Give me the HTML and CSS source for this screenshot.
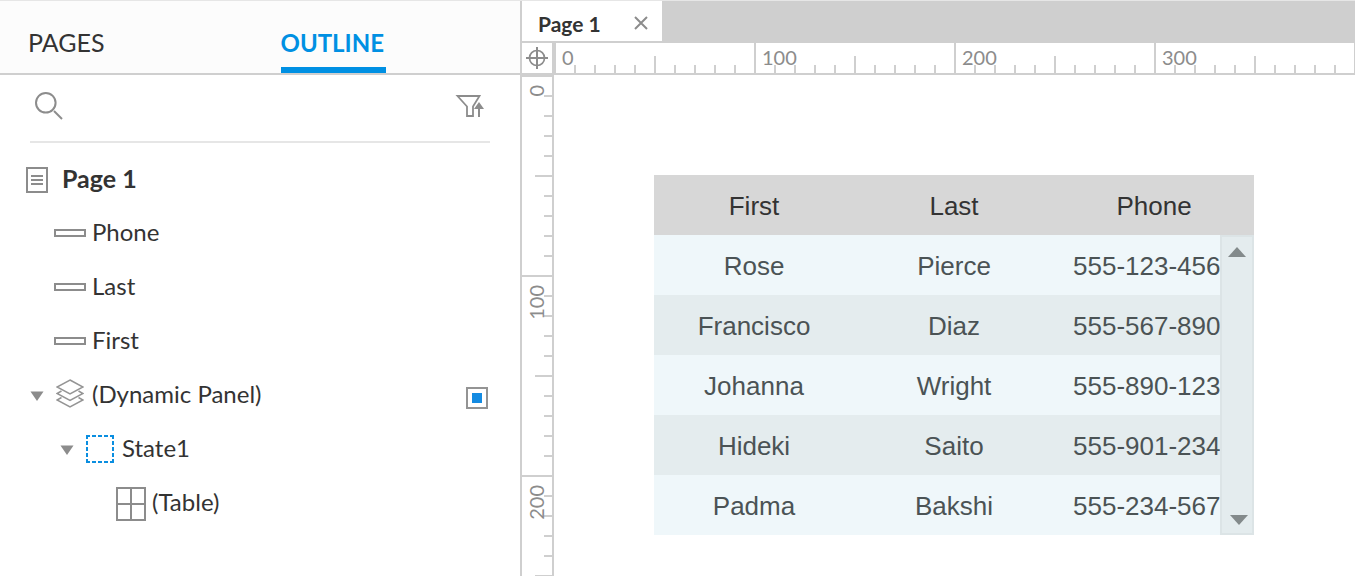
FILE: index.html
```html
<!DOCTYPE html>
<html lang="en">
<head>
<meta charset="utf-8">
<title>Page 1</title>
<link rel="stylesheet" href="styles.css">
</head>
<body>
<div class="app">
  <aside class="sidebar">
    <nav class="side-tabs">
      <button class="side-tab" type="button">PAGES</button>
      <button class="side-tab active" type="button">OUTLINE</button>
    </nav>
    <div class="search">
      <button class="icon-button" type="button" aria-label="Search">
        <svg width="30" height="30" viewBox="0 0 30 30" fill="none" stroke="#8c8c8c" stroke-width="2"><circle cx="11.8" cy="11.8" r="9.8"/><path d="M20 20l8 8"/></svg>
      </button>
      <button class="icon-button" type="button" aria-label="Filter">
        <svg width="30" height="30" viewBox="0 0 30 30" fill="none" stroke="#8c8c8c" stroke-width="2"><path d="M2.500 5H24.500L18 15.500V25H12V15.500Z" stroke-width="1.800"/><path d="M24 26V15"/><path d="M19 18L24 11L29 18Z" fill="#8c8c8c" stroke="none"/></svg>
      </button>
    </div>
    <ul class="tree">
      <li class="row level-0">
        <svg width="22" height="28" viewBox="0 0 22 28" fill="none" stroke="#8c8c8c" stroke-width="2"><path d="M1 3H21V27H1ZM5 11H17M5 15H17M5 19H17"/></svg>
        <span class="label page-name">Page 1</span>
      </li>
      <li class="row level-1">
        <svg width="32" height="8" viewBox="0 0 32 8" fill="none" stroke="#8c8c8c" stroke-width="2"><path d="M1 1H31V7H1Z"/></svg>
        <span class="label">Phone</span>
      </li>
      <li class="row level-1">
        <svg width="32" height="8" viewBox="0 0 32 8" fill="none" stroke="#8c8c8c" stroke-width="2"><path d="M1 1H31V7H1Z"/></svg>
        <span class="label">Last</span>
      </li>
      <li class="row level-1">
        <svg width="32" height="8" viewBox="0 0 32 8" fill="none" stroke="#8c8c8c" stroke-width="2"><path d="M1 1H31V7H1Z"/></svg>
        <span class="label">First</span>
      </li>
      <li class="row branch-1">
        <button class="icon-button toggle" type="button" aria-label="Collapse panel"><svg width="14" height="12" viewBox="0 0 14 12"><path d="M0.500 2.500H13.500L7 12Z" fill="#8c8c8c"/></svg></button>
        <svg width="28" height="32" viewBox="0 0 28 32" fill="none" stroke="#949494" stroke-width="1.500"><path d="M14 1L27 8L14 15L1 8Z"/><path d="M5.500 12L1 14.500L14 21.500L27 14.500L22.500 12"/><path d="M5.500 18.500L1 21L14 28L27 21L22.500 18.500"/></svg>
        <span class="label">(Dynamic Panel)</span>
        <button class="icon-button visibility" type="button" aria-label="Panel visibility"><svg width="22" height="28" viewBox="0 0 22 28"><path d="M1 7H21V27H1Z" fill="none" stroke="#949494" stroke-width="2"/><path d="M6 12H16V22H6Z" fill="#148be2"/></svg></button>
      </li>
      <li class="row branch-2">
        <button class="icon-button toggle" type="button" aria-label="Collapse state"><svg width="14" height="12" viewBox="0 0 14 12"><path d="M0.500 2.500H13.500L7 12Z" fill="#8c8c8c"/></svg></button>
        <svg width="28" height="28" viewBox="0 0 28 28" fill="none" stroke="#0a8ee0" stroke-width="2" stroke-dasharray="4 2"><path d="M0 1H28M0 27H28M1 0V28M27 0V28"/></svg>
        <span class="label">State1</span>
      </li>
      <li class="row level-3">
        <svg width="30" height="36" viewBox="0 0 30 36" fill="none" stroke="#8c8c8c" stroke-width="2"><path d="M1 3H29V35H1ZM15 3V35M1 19H29"/></svg>
        <span class="label">(Table)</span>
      </li>
    </ul>
  </aside>
  <main class="editor">
    <div class="page-tabs">
      <div class="page-tab">
        <span>Page 1</span>
        <button class="icon-button" type="button" aria-label="Close"><svg width="14" height="14" viewBox="0 0 14 14" fill="none" stroke="#8c8c8c" stroke-width="2"><path d="M1 1L13 13M13 1L1 13"/></svg></button>
      </div>
    </div>
    <div class="workspace">
      <div class="corner"><svg width="22" height="22" viewBox="0 0 22 22" fill="none" stroke="#8c8c8c" stroke-width="2"><circle cx="11" cy="11" r="7.500" stroke-width="1.700"/><path d="M11 0V22M0 11H22"/></svg></div>
      <div class="ruler-x"><span>0</span><span>100</span><span>200</span><span>300</span></div>
      <div class="ruler-y"><div><span>0</span></div><div><span>100</span></div><div><span>200</span></div></div>
      <div class="canvas">
        <div class="panel">
          <table class="contacts">
            <thead><tr><th>First</th><th>Last</th><th>Phone</th></tr></thead>
            <tbody>
              <tr><td>Rose</td><td>Pierce</td><td class="phone">555-123-456</td></tr>
              <tr><td>Francisco</td><td>Diaz</td><td class="phone">555-567-890</td></tr>
              <tr><td>Johanna</td><td>Wright</td><td class="phone">555-890-123</td></tr>
              <tr><td>Hideki</td><td>Saito</td><td class="phone">555-901-234</td></tr>
              <tr><td>Padma</td><td>Bakshi</td><td class="phone">555-234-567</td></tr>
            </tbody>
          </table>
          <div class="scrollbar">
            <button class="icon-button" type="button" aria-label="Scroll up"><svg width="18" height="10" viewBox="0 0 18 10"><path d="M0 10L9 0L18 10Z" fill="#838a8b"/></svg></button>
            <button class="icon-button down" type="button" aria-label="Scroll down"><svg width="18" height="10" viewBox="0 0 18 10"><path d="M0 0H18L9 10Z" fill="#838a8b"/></svg></button>
          </div>
        </div>
      </div>
    </div>
  </main>
</div>
</body>
</html>
```
FILE: styles.css
```css
* { box-sizing: border-box; }
body {
  margin: 0;
  background: #fff;
  color: #333;
  font-family: Lato, sans-serif;
  font-size: 24px;
}
button { font: inherit; color: inherit; background: none; border: 0; padding: 0; }
svg { display: block; flex: none; }

.app {
  display: flex;
  height: 100vh;
  border-top: 1px solid #e6e6e6;
  overflow: hidden;
}

.sidebar { flex: none; width: 522px; border-right: 2px solid #cfcfcf; }
.side-tabs {
  display: flex;
  gap: 176px;
  height: 74px;
  padding-left: 28px;
  background: #fcfcfc;
  border-bottom: 2px solid #cfcfcf;
}
.side-tab { padding-top: 16px; border-bottom: 6px solid transparent; font-size: 25px; }
.side-tab.active { padding-right: 2px; font-size: 24px; font-weight: 700; color: #0090e3; border-color: #0090e3; }

.search {
  display: flex;
  justify-content: space-between;
  align-items: center;
  height: 68px;
  margin: 0 30px;
  padding: 0 5px 4px 4px;
  border-bottom: 2px solid #e6e6e6;
}

.tree { list-style: none; margin: 0; padding: 9px 32px 0 0; }
.row { display: flex; align-items: center; height: 54px; }
.level-0 { padding-left: 26px; }
.level-1 { padding-left: 54px; }
.level-3 { padding-left: 116px; }
.branch-1 { padding-left: 30px; }
.branch-2 { padding-left: 60px; }
.label { margin-left: 6px; padding-bottom: 2px; line-height: 32px; }
.branch-1 .label, .branch-2 .label { margin-left: 8px; }
.page-name { margin-left: 14px; font-size: 25px; font-weight: 700; }
.toggle { margin-right: 12px; }
.visibility { margin-left: auto; }

.editor { flex: 1; min-width: 0; display: flex; flex-direction: column; }
.page-tabs { flex: none; height: 42px; background: #cfcfcf; padding-bottom: 2px; }
.page-tab {
  display: flex;
  align-items: center;
  justify-content: space-between;
  width: 140px;
  height: 40px;
  padding: 4px 14px 0 16px;
  background: #fff;
  font-size: 21px;
  font-weight: 700;
}
.workspace {
  flex: 1;
  min-height: 0;
  display: grid;
  grid-template: 32px minmax(0, 1fr) / 32px minmax(0, 1fr);
}
.corner {
  display: grid;
  place-items: center;
  border: solid #cfcfcf;
  border-width: 0 2px 2px 0;
}
.ruler-x, .ruler-y { overflow: hidden; color: #8c8c8c; font-size: 20px; line-height: 22px; }
.ruler-x {
  display: flex;
  border-bottom: 2px solid #cfcfcf;
  background:
    linear-gradient(to right, #cfcfcf 2px, transparent 2px) left bottom / 20px 8px repeat-x,
    linear-gradient(to right, #cfcfcf 2px, transparent 2px) left bottom / 100px 17px repeat-x,
    linear-gradient(to right, #cfcfcf 2px, transparent 2px) left bottom / 200px 100% repeat-x;
}
.ruler-x span { flex: none; width: 200px; padding: 3px 0 0 8px; }
.ruler-y {
  border-right: 2px solid #cfcfcf;
  background:
    linear-gradient(#cfcfcf 2px, transparent 2px) right top / 8px 20px repeat-y,
    linear-gradient(#cfcfcf 2px, transparent 2px) right top / 17px 100px repeat-y,
    linear-gradient(#cfcfcf 2px, transparent 2px) right top / 100% 200px repeat-y;
}
.ruler-y div { height: 200px; padding: 10px 0 0 3px; }
.ruler-y span { display: block; width: 22px; writing-mode: vertical-rl; transform: rotate(180deg); }

.canvas { padding: 100px; overflow: hidden; }
.panel { position: relative; width: 600px; }
.contacts {
  width: 100%;
  table-layout: fixed;
  border-collapse: collapse;
  color: #4b5355;
  font-family: "Liberation Sans", Arial, sans-serif;
  font-size: 26px;
}
.contacts th, .contacts td { height: 60px; padding: 2px 0 0; font-weight: 400; text-align: center; }
.contacts th { background: #d7d7d7; color: #333; }
.contacts td { background: #eff7fa; }
.contacts tr:nth-child(even) td { background: #e4ecee; }
.contacts .phone { padding-left: 19px; text-align: left; }
.scrollbar {
  position: absolute;
  top: 60px;
  right: 0;
  bottom: 0;
  width: 34px;
  display: flex;
  flex-direction: column;
  align-items: flex-start;
  justify-content: space-between;
  padding: 10px 4px 8px 6px;
  border: 2px solid #dce4e6;
  background: #e4ecee;
}
.scrollbar .down { align-self: flex-end; }
```
